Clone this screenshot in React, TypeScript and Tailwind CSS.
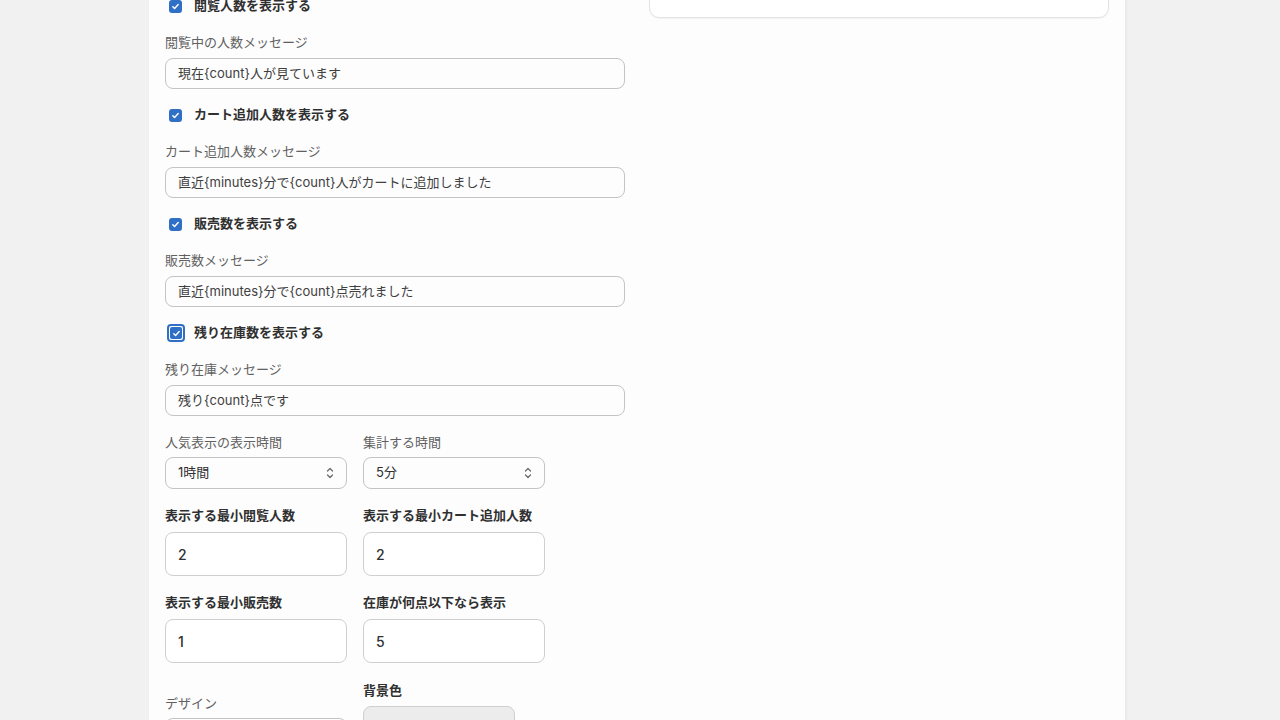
import React from "react";

const font = { fontFamily: "Inter, 'Noto Sans CJK JP', sans-serif" };

const Check = ({ focused = false }: { focused?: boolean }) =>
  focused ? (
    <span className="flex h-[18px] w-[18px] items-center justify-center rounded-[4px] border-2 border-[#2f6fc6] bg-white ml-[2px] mr-[9px]">
      <span className="flex h-[12px] w-[12px] items-center justify-center rounded-[2px] bg-[#2f6fc6]">
        <svg width="9" height="9" viewBox="0 0 10 10" fill="none">
          <path d="M2 5.2l2 2L8 2.8" stroke="white" strokeWidth="1.6" strokeLinecap="round" strokeLinejoin="round" />
        </svg>
      </span>
    </span>
  ) : (
    <span className="flex h-[13px] w-[13px] items-center justify-center rounded-[3px] bg-[#2f6fc6] ml-[4px] mr-[12px]">
      <svg width="9" height="9" viewBox="0 0 10 10" fill="none">
        <path d="M2 5.2l2 2L8 2.8" stroke="white" strokeWidth="1.6" strokeLinecap="round" strokeLinejoin="round" />
      </svg>
    </span>
  );

const Toggle = ({ label, value, message, focused = false }: { label: string; value: string; message: string; focused?: boolean }) => (
  <div className="flex flex-col">
    <div className="flex h-[20px] items-center">
      <Check focused={focused} />
      <span className="text-[13px] font-semibold text-[#303030]">{label}</span>
    </div>
    <div className="mt-[16px] h-[20px] text-[13px] leading-[20px] text-[#616161]">{message}</div>
    <div className="mt-[6px] flex h-[31px] items-center rounded-[8px] border border-[#c4c4c4] bg-[#fdfdfd] px-[12px] text-[13px] text-[#404040]">
      {value}
    </div>
  </div>
);

const SelectBox = ({ value }: { value: string }) => (
  <div className="flex h-[32px] items-center justify-between rounded-[8px] border border-[#c4c4c4] bg-[#fdfdfd] pl-[12px] pr-[10px] text-[13px] text-[#303030]">
    <span>{value}</span>
    <svg width="12" height="16" viewBox="0 0 12 16" fill="none">
      <path d="M3.5 6l2.5-2.5L8.5 6M3.5 10l2.5 2.5L8.5 10" stroke="#6b6b6b" strokeWidth="1.3" strokeLinecap="round" strokeLinejoin="round" />
    </svg>
  </div>
);

const NumberField = ({ label, value }: { label: string; value: string }) => (
  <div className="flex flex-col">
    <div className="h-[20px] text-[13px] font-semibold leading-[20px] text-[#303030]">{label}</div>
    <div className="mt-[7px] flex h-[44px] items-center rounded-[8px] border border-[#cfcfcf] bg-white px-[12px] text-[14px] font-medium text-[#303030]">
      {value}
    </div>
  </div>
);

export default function App() {
  return (
    <div className="flex min-h-[720px] w-full bg-[#f1f1f1] pl-[149px]" style={font}>
      <div className="flex w-[976px] gap-[24px] bg-[#fdfdfd] px-[16px] pb-[40px] shadow-[1px_0_3px_rgba(0,0,0,0.06)]">
        {/* left column */}
        <div className="-mt-[4px] flex w-[460px] flex-col gap-[16px]">
          <Toggle label="閲覧人数を表示する" message="閲覧中の人数メッセージ" value="現在{count}人が見ています" />
          <Toggle label="カート追加人数を表示する" message="カート追加人数メッセージ" value="直近{minutes}分で{count}人がカートに追加しました" />
          <Toggle label="販売数を表示する" message="販売数メッセージ" value="直近{minutes}分で{count}点売れました" />
          <Toggle label="残り在庫数を表示する" message="残り在庫メッセージ" value="残り{count}点です" focused />

          <div className="grid grid-cols-[182px_182px] gap-x-[16px]">
            <div className="flex flex-col">
              <div className="h-[20px] text-[13px] leading-[20px] text-[#616161]">人気表示の表示時間</div>
              <div className="mt-[5px]">
                <SelectBox value="1時間" />
              </div>
            </div>
            <div className="flex flex-col">
              <div className="h-[20px] text-[13px] leading-[20px] text-[#616161]">集計する時間</div>
              <div className="mt-[5px]">
                <SelectBox value="5分" />
              </div>
            </div>
          </div>

          <div className="grid grid-cols-[182px_182px] gap-x-[16px]">
            <NumberField label="表示する最小閲覧人数" value="2" />
            <NumberField label="表示する最小カート追加人数" value="2" />
          </div>

          <div className="grid grid-cols-[182px_182px] gap-x-[16px]">
            <NumberField label="表示する最小販売数" value="1" />
            <NumberField label="在庫が何点以下なら表示" value="5" />
          </div>

          <div className="mt-[1px] grid grid-cols-[182px_182px] items-end gap-x-[16px]">
            <div className="flex flex-col">
              <div className="h-[20px] text-[13px] leading-[20px] text-[#616161]">デザイン</div>
              <div className="mt-[5px]">
                <SelectBox value="" />
              </div>
            </div>
            <div className="flex flex-col">
              <div className="h-[20px] text-[13px] font-semibold leading-[20px] text-[#303030]">背景色</div>
              <div className="mt-[6px] h-[44px] w-[152px] rounded-[8px] border border-[#cfcfcf] bg-[#ececec]" />
            </div>
          </div>
        </div>

        {/* right column */}
        <div className="w-[460px]">
          <div className="-mt-[20px] h-[38px] rounded-[10px] border border-[#e3e3e3] bg-white shadow-[0_1px_1px_rgba(0,0,0,0.04)]" />
        </div>
      </div>
    </div>
  );
}
